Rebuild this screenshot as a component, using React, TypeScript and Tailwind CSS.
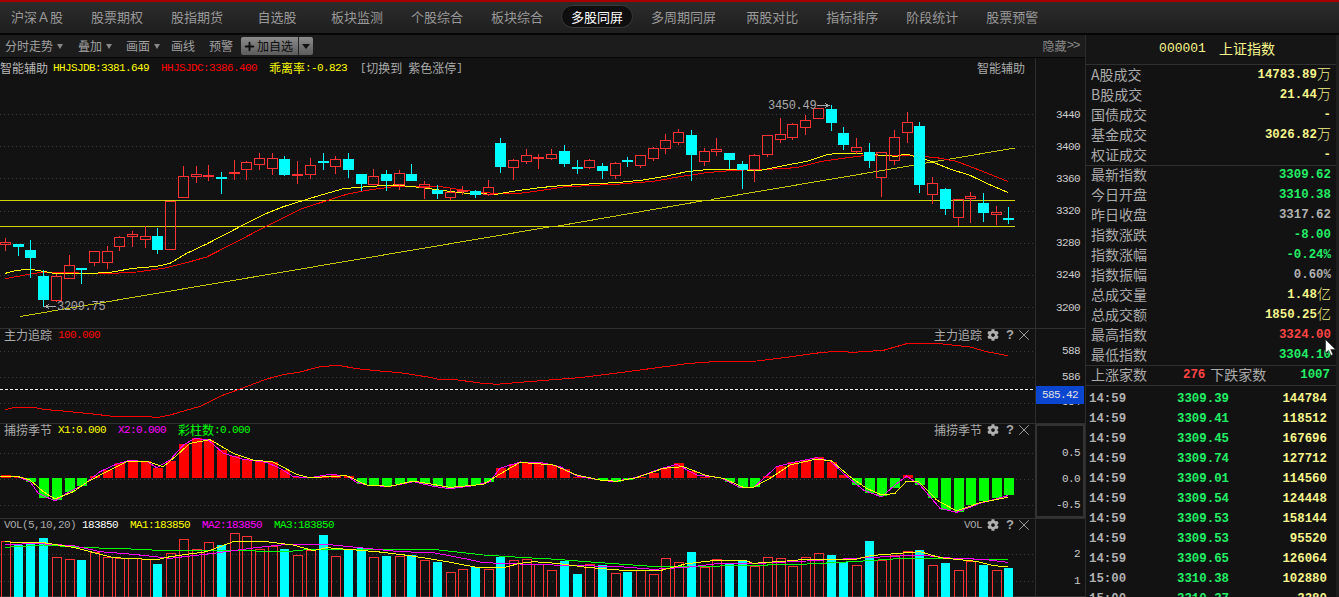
import type { ReactNode } from 'react';
import { Plus, X } from 'lucide-react';
import { FaCog } from 'react-icons/fa';

/* All chart series are read off a 3x crop of the terminal: the "z" values below are crop
   pixels, so z / 3 gives screen pixels. Section A starts at x=0, section B at x=520. */

const TABS = ['沪深Ａ股', '股票期权', '股指期货', '自选股', '板块监测', '个股综合', '板块综合', '多股同屏', '多周期同屏', '两股对比', '指标排序', '阶段统计', '股票预警'];

const barX = (i: number) => Math.round(5 + 12.7 * i) + 0.5;

// [wickTop, bodyTop, bodyBottom, wickBottom, 1 = up (hollow red) / 0 = down (cyan)]
const CANDLES: number[][] = [
  [444, 455, 464, 482, 1], [462, 462, 470, 497, 0], [450, 480, 503, 563, 0], [540, 558, 630, 650, 0],
  [552, 558, 634, 636, 1], [495, 526, 566, 566, 1], [533, 534, 540, 581, 0], [484, 484, 520, 527, 1],
  [468, 484, 520, 536, 1], [438, 442, 470, 482, 1], [423, 433, 440, 470, 1], [408, 439, 449, 473, 1],
  [414, 438, 480, 491, 0], [333, 333, 479, 479, 1], [228, 259, 323, 323, 1], [228, 253, 260, 278, 1],
  [225, 256, 260, 272, 1], [246, 261, 263, 311, 0], [210, 246, 251, 269, 1], [213, 217, 241, 269, 1],
  [190, 205, 224, 239, 1], [189, 205, 236, 254, 1], [198, 207, 255, 258, 0], [213, 252, 255, 281, 1],
  [204, 226, 254, 266, 1], [189, 214, 218, 239, 0], [198, 208, 230, 251, 1], [189, 207, 240, 263, 0],
  [252, 252, 282, 303, 0], [237, 259, 284, 284, 1], [240, 252, 273, 302, 0], [240, 250, 284, 299, 1],
  [222, 252, 273, 273, 0], [273, 283, 294, 326, 1], [285, 300, 312, 326, 0], [293, 305, 323, 330, 1],
  [288, 299, 306, 315, 1], [300, 303, 315, 323, 0], [270, 292, 315, 318, 1], [144, 159, 231, 249, 0],
  [207, 211, 233, 269, 1], [177, 196, 215, 222, 1], [192, 202, 206, 237, 1], [177, 193, 206, 210, 1],
  [165, 183, 222, 231, 0], [210, 231, 235, 252, 0], [207, 211, 233, 237, 1], [219, 228, 243, 267, 0],
  [216, 220, 257, 267, 1], [201, 209, 216, 231, 0], [195, 196, 227, 234, 1], [171, 175, 207, 213, 1],
  [132, 151, 176, 192, 1], [117, 127, 158, 165, 1], [120, 135, 195, 273, 0], [174, 184, 215, 228, 1],
  [144, 178, 185, 198, 1], [189, 189, 210, 237, 0], [213, 222, 240, 297, 0], [192, 196, 240, 276, 1],
  [135, 136, 194, 201, 1], [84, 133, 149, 159, 1], [99, 103, 143, 150, 1], [75, 91, 113, 135, 1],
  [54, 55, 87, 87, 1], [45, 57, 99, 123, 0], [111, 129, 165, 180, 0], [144, 172, 185, 192, 1],
  [159, 186, 213, 234, 0], [186, 187, 263, 321, 1], [120, 142, 212, 226, 1], [66, 97, 128, 159, 1],
  [96, 108, 285, 309, 0], [261, 280, 314, 342, 1], [294, 297, 357, 375, 0], [327, 328, 383, 408, 1],
  [306, 319, 326, 399, 1], [309, 339, 369, 396, 0], [348, 366, 374, 405, 1], [351, 384, 386, 402, 0],
];

const MAIN_YELLOW = [
  [16, 550, 30, 546, 50, 541, 90, 538, 130, 544, 160, 550, 200, 551, 260, 551, 330, 547, 400, 535, 470, 529, 510, 520, 560, 490, 620, 462, 720, 410, 800, 370, 850, 350, 905, 333, 960, 316, 1030, 296, 1100, 290, 1180, 285, 1260, 292, 1340, 303, 1400, 310, 1490, 313, 1520, 307],
  [0, 301, 60, 293, 120, 287, 190, 283, 300, 277, 370, 270, 440, 258, 500, 245, 570, 238, 640, 239, 720, 241, 780, 229, 860, 214, 920, 194, 960, 189, 1030, 192, 1130, 199, 1150, 193, 1170, 195, 1230, 213, 1290, 237, 1350, 256, 1400, 280, 1463, 307],
];
const MAIN_RED = [
  [16, 566, 60, 558, 100, 550, 150, 546, 200, 546, 260, 551, 340, 550, 410, 546, 490, 535, 560, 518, 620, 501, 720, 450, 800, 408, 900, 358, 980, 332, 1040, 313, 1100, 301, 1180, 290, 1260, 290, 1330, 291, 1400, 302, 1480, 310],
  [0, 310, 60, 302, 130, 291, 220, 286, 300, 282, 400, 274, 480, 260, 560, 248, 640, 241, 740, 238, 830, 233, 900, 215, 960, 206, 1040, 196, 1180, 197, 1250, 203, 1310, 214, 1380, 241, 1463, 274],
];

const TRACK_RED = [
  [16, 254, 40, 248, 100, 247, 130, 253, 190, 258, 260, 265, 340, 274, 450, 275, 470, 278, 510, 270, 600, 244, 660, 214, 720, 192, 800, 162, 850, 149, 900, 141, 960, 125, 1015, 121, 1070, 131, 1140, 138, 1200, 143, 1290, 157, 1310, 162, 1360, 163, 1440, 174, 1490, 178],
  [0, 172, 100, 164, 180, 158, 300, 143, 420, 127, 500, 116, 580, 110, 710, 108, 800, 97, 900, 83, 950, 79, 1000, 82, 1090, 76, 1160, 56, 1250, 55, 1350, 66, 1400, 80, 1463, 92],
];

// end of each histogram bar, zero line at z=460
const HIST = [
  450, 455, 472, 519, 526, 500, 484, 454, 435, 414, 406, 408, 428, 408, 357, 340, 345, 375, 392, 401,
  407, 411, 434, 456, 460, 452, 449, 452, 477, 481, 484, 478, 470, 478, 484, 490, 484, 481, 470, 429,
  418, 410, 414, 420, 431, 455, 460, 466, 471, 464, 455, 443, 428, 414, 438, 455, 460, 472, 489, 487,
  453, 423, 411, 405, 396, 410, 450, 480, 504, 514, 489, 450, 480, 519, 555, 562, 540, 529, 519, 510,
];
const HIST_MAGENTA = [
  [0, 455, 55, 456, 90, 470, 115, 505, 165, 528, 200, 505, 250, 480, 300, 440, 350, 417, 385, 407, 440, 409, 470, 428, 510, 405, 550, 360, 585, 340, 625, 345, 670, 385, 730, 403, 800, 412, 840, 430, 880, 455, 930, 458, 990, 448, 1040, 453, 1070, 472, 1110, 482, 1170, 484, 1240, 470, 1300, 484, 1350, 491, 1420, 482, 1470, 470, 1500, 430],
  [0, 411, 60, 412, 120, 425, 170, 453, 240, 465, 280, 470, 350, 457, 420, 432, 470, 418, 530, 450, 600, 458, 660, 488, 700, 488, 770, 425, 820, 412, 890, 398, 930, 408, 985, 458, 1030, 495, 1085, 516, 1125, 480, 1160, 453, 1200, 480, 1260, 550, 1310, 562, 1380, 535, 1463, 512],
];
const HIST_YELLOW = [
  [0, 453, 55, 455, 90, 465, 130, 500, 165, 522, 220, 500, 260, 472, 310, 445, 380, 410, 440, 409, 490, 425, 520, 400, 570, 355, 630, 344, 700, 385, 760, 405, 820, 411, 890, 448, 930, 458, 1040, 452, 1100, 480, 1170, 484, 1240, 468, 1350, 487, 1450, 478, 1500, 447],
  [0, 412, 100, 420, 170, 450, 240, 465, 290, 469, 350, 458, 430, 430, 490, 425, 560, 452, 610, 460, 670, 487, 700, 487, 750, 460, 810, 420, 890, 402, 935, 408, 990, 455, 1040, 490, 1085, 510, 1125, 505, 1160, 468, 1195, 468, 1250, 525, 1310, 558, 1380, 533, 1463, 517],
];

// [top of bar, 1 = up / 0 = down]
const VOLS: number[][] = [
  [647, 1], [660, 0], [653, 0], [639, 0], [697, 1], [703, 1], [705, 0], [682, 1], [695, 1], [700, 1],
  [700, 1], [703, 1], [717, 0], [685, 1], [643, 1], [673, 1], [652, 1], [660, 0], [625, 1], [634, 1],
  [672, 1], [664, 1], [672, 0], [691, 1], [676, 1], [630, 0], [694, 1], [673, 0], [670, 0], [697, 1],
  [693, 0], [694, 1], [690, 0], [706, 1], [711, 0], [742, 1], [733, 1], [725, 0], [733, 1], [695, 0],
  [706, 1], [703, 1], [718, 1], [736, 1], [708, 0], [747, 0], [718, 1], [720, 0], [745, 1], [741, 0],
  [735, 1], [748, 1], [700, 1], [712, 1], [681, 0], [725, 1], [703, 1], [714, 0], [706, 0], [724, 1],
  [697, 1], [700, 1], [722, 1], [697, 1], [685, 1], [690, 0], [712, 0], [721, 1], [648, 0], [706, 1],
  [690, 1], [679, 1], [675, 0], [721, 1], [714, 0], [736, 1], [707, 1], [720, 0], [736, 1], [729, 0],
];
const VOL_YELLOW = [
  [16, 650, 60, 653, 130, 653, 220, 667, 290, 685, 340, 698, 470, 704, 510, 695, 560, 688, 620, 680, 700, 650, 800, 650, 880, 660, 940, 677, 980, 668, 1130, 680, 1230, 692, 1330, 708, 1430, 727, 1510, 728],
  [0, 715, 40, 710, 110, 715, 200, 727, 310, 736, 420, 737, 500, 716, 580, 707, 680, 708, 700, 715, 800, 708, 870, 702, 1010, 702, 1050, 692, 1200, 680, 1260, 698, 1370, 709, 1420, 722, 1463, 725],
];
const VOL_MAGENTA = [
  [16, 660, 100, 655, 220, 662, 300, 680, 400, 688, 510, 700, 640, 685, 700, 677, 760, 669, 860, 658, 1000, 660, 1100, 670, 1200, 680, 1300, 683, 1400, 702, 1450, 713],
  [0, 717, 100, 720, 300, 725, 400, 733, 500, 727, 600, 715, 700, 716, 860, 708, 1040, 698, 1200, 690, 1300, 700, 1390, 703, 1463, 712],
];
const VOL_GREEN = [
  [16, 667, 130, 660, 260, 668, 370, 671, 500, 677, 720, 677, 860, 680, 940, 672, 1130, 672, 1300, 673, 1450, 690],
  [0, 697, 110, 703, 200, 710, 380, 723, 600, 723, 840, 718, 1000, 710, 1150, 700, 1463, 703],
];

const UP_RED = '#ff3333';
const CYAN = '#00ffff';

const toPoints = (sections: number[][], offset: number) =>
  sections
    .map((flat, s) =>
      flat
        .map((v, i) => (i % 2 === 0 ? `${(s === 0 ? 0 : 520) + v / 3},` : `${v / 3 + offset} `))
        .join('')
    )
    .join('');

function Series({ data, offset, color }: { data: number[][]; offset: number; color: string }) {
  return <polyline points={toPoints(data, offset)} fill="none" stroke={color} strokeWidth={1} shapeRendering="crispEdges" />;
}

function Grid({ ys }: { ys: number[] }) {
  return (
    <>
      {ys.map((y) => (
        <line key={y} x1={0} x2={1035} y1={y + 0.5} y2={y + 0.5} stroke="#3c3c3c" strokeDasharray="1 3" />
      ))}
    </>
  );
}

function Chart({ height, children }: { height: number; children: ReactNode }) {
  return (
    <svg className="absolute inset-0" width={1035} height={height} viewBox={`0 0 1035 ${height}`} shapeRendering="crispEdges">
      {children}
    </svg>
  );
}

function MainChart() {
  const off = 32; // main pane starts at y=58
  return (
    <Chart height={270}>
      <Grid ys={[56, 88, 120, 153, 185, 217, 249]} />
      <line x1={0} x2={1015} y1={142.5} y2={142.5} stroke="#d4d400" />
      <line x1={0} x2={1015} y1={168.5} y2={168.5} stroke="#d4d400" />
      <polyline points="20,258.5 552,168.5" fill="none" stroke="#c4c400" />
      <polyline points="558,168 705,142.5" fill="none" stroke="#c4c400" />
      <polyline points="711,141.5 1015,90" fill="none" stroke="#c4c400" />
      <Series data={MAIN_RED} offset={off} color="#ff0000" />
      <Series data={MAIN_YELLOW} offset={off} color="#ffff00" />
      {CANDLES.map(([wt, bt, bb, wb, up], i) => {
        const x = barX(i);
        const c = up ? UP_RED : CYAN;
        const [a, b, d, e] = [wt, bt, bb, wb].map((z) => Math.round(z / 3) + off);
        return (
          <g key={i}>
            <line x1={x} x2={x} y1={a} y2={b} stroke={c} />
            <line x1={x} x2={x} y1={d} y2={e} stroke={c} />
            {up ? (
              <rect x={x - 5} y={b + 0.5} width={10} height={Math.max(d - b - 1, 1)} fill="none" stroke={c} />
            ) : (
              <rect x={x - 5.5} y={b} width={11} height={Math.max(d - b, 2)} fill={c} />
            )}
          </g>
        );
      })}
      <text x={768} y={51} fill="#aaaaaa" fontSize={12} fontFamily="Liberation Mono" letterSpacing={-0.3}>3450.49</text>
      <path d="M817 47.5H829M825 45.5L829 47.5L825 49.5" fill="none" stroke="#aaaaaa" />
      <text x={57} y={252} fill="#aaaaaa" fontSize={12} fontFamily="Liberation Mono" letterSpacing={-0.3}>3209.75</text>
      <path d="M45 248.5H56M49 246.5L45 248.5L49 250.5" fill="none" stroke="#aaaaaa" />
    </Chart>
  );
}

function TrackChart() {
  return (
    <Chart height={94}>
      <Grid ys={[22, 48, 74]} />
      <line x1={0} x2={1035} y1={60.5} y2={60.5} stroke="#f0f0f0" strokeDasharray="3 2" />
      <Series data={TRACK_RED} offset={-4} color="#ff0000" />
    </Chart>
  );
}

function HistChart() {
  const off = -99;
  const zero = Math.round(460 / 3) + off;
  return (
    <Chart height={94}>
      <Grid ys={[29, 55, 81]} />
      {HIST.map((z, i) => {
        const y = Math.round(z / 3) + off;
        if (y === zero) return null;
        const up = y < zero;
        return <rect key={i} x={barX(i) - 5} y={up ? y : zero} width={10} height={Math.abs(y - zero)} fill={up ? '#ff0000' : '#00ff00'} />;
      })}
      <Series data={HIST_MAGENTA} offset={off} color="#ff00ff" />
      <Series data={HIST_YELLOW} offset={off} color="#ffff00" />
    </Chart>
  );
}

function VolChart() {
  const off = -194;
  return (
    <Chart height={78}>
      <Grid ys={[35, 62]} />
      {VOLS.map(([z, up], i) => {
        const y = Math.round(z / 3) + off;
        const x = barX(i);
        return up ? (
          <rect key={i} x={x - 4} y={y + 0.5} width={9} height={90} fill="none" stroke={UP_RED} />
        ) : (
          <rect key={i} x={x - 4.5} y={y} width={9} height={90} fill={CYAN} />
        );
      })}
      <Series data={VOL_GREEN} offset={off} color="#00ff00" />
      <Series data={VOL_MAGENTA} offset={off} color="#ff00ff" />
      <Series data={VOL_YELLOW} offset={off} color="#ffff00" />
    </Chart>
  );
}

function M({ className, children }: { className?: string; children: ReactNode }) {
  return <span className={`[font-family:'Liberation_Mono',monospace] text-[11px] tracking-[-0.6px] ${className ?? ''}`}>{children}</span>;
}

function PaneTools({ name }: { name: ReactNode }) {
  return (
    <div className="flex items-center pr-[2px] text-[#aaaaaa]">
      {name}
      <FaCog className="ml-[5px] text-[12px] text-[#b0b0b0]" />
      <span className="ml-[7px] w-[7px] text-center [font-family:'Liberation_Sans',sans-serif] text-[13px] font-bold">?</span>
      <X size={18} strokeWidth={1.2} className="ml-[2px]" />
    </div>
  );
}

function Pane({ height, header, chart, axis }: { height: string; header: ReactNode; chart: ReactNode; axis: ReactNode }) {
  return (
    <div className={`flex border-b border-[#303030] ${height}`}>
      <div className="relative w-[1035px] shrink-0">
        {chart}
        <div className="relative -mt-px flex h-[14px] items-center justify-between text-[12px] leading-[14px] text-[#aaaaaa]">{header}</div>
      </div>
      {axis}
    </div>
  );
}

function Axis({ labels, className }: { labels: string[]; className: string }) {
  return (
    <div className={`flex w-[50px] flex-col items-end border-l border-[#2c2c2c] pr-[5px] text-[#cccccc] ${className}`}>
      {labels.map((label) => (
        <M key={label} className="h-[16px] leading-[16px]">{label}</M>
      ))}
    </div>
  );
}

function Caret() {
  return <span className="ml-[4px] inline-block border-x-[3.5px] border-t-[5px] border-x-transparent border-t-[#888888]" />;
}

const SUMMARY_A = [
  ['A股成交', '14783.89', '万'],
  ['B股成交', '21.44', '万'],
  ['国债成交', '-', ''],
  ['基金成交', '3026.82', '万'],
  ['权证成交', '-', ''],
];
const SUMMARY_B = [
  ['最新指数', '3309.62', '', 'text-[#22ee66]'],
  ['今日开盘', '3310.38', '', 'text-[#22ee66]'],
  ['昨日收盘', '3317.62', '', 'text-[#b0b0b0]'],
  ['指数涨跌', '-8.00', '', 'text-[#22ee66]'],
  ['指数涨幅', '-0.24%', '', 'text-[#22ee66]'],
  ['指数振幅', '0.60%', '', 'text-[#b0b0b0]'],
  ['总成交量', '1.48', '亿', 'text-[#f5f58c]'],
  ['总成交额', '1850.25', '亿', 'text-[#f5f58c]'],
  ['最高指数', '3324.00', '', 'text-[#ff4444]'],
  ['最低指数', '3304.10', '', 'text-[#22ee66]'],
];
const TICKS = [
  ['14:59', '3309.39', '144784'],
  ['14:59', '3309.41', '118512'],
  ['14:59', '3309.45', '167696'],
  ['14:59', '3309.74', '127712'],
  ['14:59', '3309.01', '114560'],
  ['14:59', '3309.54', '124448'],
  ['14:59', '3309.53', '158144'],
  ['14:59', '3309.53', '95520'],
  ['14:59', '3309.65', '126064'],
  ['15:00', '3310.38', '102880'],
  ['15:00', '3310.37', '3280'],
];

const NUM = "[font-family:'Liberation_Mono',monospace] text-[12.4px] font-bold";

function StatRow({ label, value, unit, color }: { label: string; value: string; unit: string; color: string }) {
  return (
    <div className="flex h-[20px] items-center justify-between pr-[5px] pb-[2px] pl-[5px]">
      <span className="text-[14px] leading-[18px] text-[#aaaaaa]">{label}</span>
      <span className={`flex items-center ${color}`}>
        <span className={`mt-[2px] ${NUM}`}>{value}</span>
        {unit && <span className="mb-[2px] text-[14px] leading-none font-light">{unit}</span>}
      </span>
    </div>
  );
}

function RightPanel() {
  return (
    <aside className="flex w-[251px] shrink-0 flex-col overflow-hidden border-l border-[#2c2c2c] bg-[#121212]">
      <div className="flex h-[29px] shrink-0 items-center justify-center gap-[13px] bg-[#151515] pb-[2px] pl-[12px] text-[14px] text-[#f5f58c]">
        <span className="[font-family:'Liberation_Mono',monospace] text-[13px]">000001</span>
        <span>上证指数</span>
      </div>
      <div className="shrink-0 border-t border-[#303030]">
        {SUMMARY_A.map(([label, value, unit]) => (
          <StatRow key={label} label={label} value={value} unit={unit} color="text-[#f5f58c]" />
        ))}
      </div>
      <div className="shrink-0 border-b border-[#303030] shadow-[inset_0_1px_0_#303030]">
        {SUMMARY_B.map(([label, value, unit, color]) => (
          <StatRow key={label} label={label} value={value} unit={unit} color={color} />
        ))}
      </div>
      <div className="flex h-[20px] shrink-0 items-center border-b border-[#303030] pr-[6px] pl-[5px]">
        <span className="mb-[3px] text-[14px] leading-[16px] text-[#aaaaaa]">上涨家数</span>
        <span className={`ml-[36px] ${NUM} text-[#ff4444]`}>276</span>
        <span className="mb-[3px] ml-[5px] text-[14px] leading-[16px] text-[#aaaaaa]">下跌家数</span>
        <span className={`ml-auto ${NUM} text-[#22ee66]`}>1007</span>
      </div>
      <div className="pt-[3px]">
        {TICKS.map(([time, price, vol], i) => (
          <div key={i} className={`grid h-[20px] grid-cols-[88px_1fr_auto] items-center pr-[9px] pl-[3px] ${NUM}`}>
            <span className="text-[#b0b0b0]">{time}</span>
            <span className="text-[#22ee66]">{price}</span>
            <span className="text-[#f5f58c]">{vol}</span>
          </div>
        ))}
      </div>
    </aside>
  );
}

export default function App() {
  return (
    <div className="relative flex h-[597px] w-[1339px] flex-col overflow-hidden bg-[#121212] [font-family:'Noto_Sans_CJK_SC','Liberation_Sans',sans-serif]">
      <div className="h-[2px] shrink-0 bg-[#a80000]" />

      {/* Tab bar */}
      <nav className="flex h-[31px] shrink-0 items-center gap-2 bg-gradient-to-b from-[#2c2c2c] to-[#1e1e1e] pb-[2px] pl-px text-[13px] text-[#999999]">
        {TABS.map((tab) => (
          <span
            key={tab}
            className={
              tab === '多股同屏'
                ? 'min-w-[72px] rounded-full border border-[#3a3a3a] bg-[#0e0e0e] px-[9px] py-[1px] text-center text-white'
                : tab === '多周期同屏'
                  ? 'mr-0.5 min-w-[72px] px-2.5 text-center'
                  : 'min-w-[72px] px-2.5 text-center'
            }
          >
            {tab}
          </span>
        ))}
      </nav>
      <div className="h-[2px] shrink-0 bg-[#050505]" />

      <div className="flex min-h-0 flex-1">
        <div className="flex w-[1085px] shrink-0 flex-col">
          {/* Toolbar */}
          <div className="flex h-[23px] shrink-0 items-center border-b border-[#050505] bg-[#1c1c1c] pl-[5px] text-[12px] text-[#a0a0a0]">
            <span className="flex w-[73px] items-center">分时走势<Caret /></span>
            <span className="flex w-[48px] items-center">叠加<Caret /></span>
            <span className="flex w-[45px] items-center">画面<Caret /></span>
            <span className="w-[38px]">画线</span>
            <span className="w-[32px]">预警</span>
            <div className="flex h-[18px] w-[72px] items-center rounded-[2px] bg-gradient-to-b from-[#8c8c8c] to-[#5c5c5c] text-[#0c0c0c]">
              <Plus size={13} strokeWidth={3.5} className="ml-[2px] shrink-0" />
              <span className="ml-px w-[41px]">加自选</span>
              <span className="flex h-full flex-1 items-center justify-center border-l border-[#222222]">
                <span className="inline-block border-x-[4px] border-t-[5px] border-x-transparent border-t-[#111111]" />
              </span>
            </div>
            <span className="ml-auto flex items-center pr-[6px] text-[#888888]">
              隐藏<span className="[font-family:'Liberation_Mono',monospace] text-[13px] tracking-[-1.5px]">&gt;&gt;</span>
            </span>
          </div>

          <Pane
            height="h-[271px]"
            chart={<MainChart />}
            header={
              <>
                <div className="mt-[8px] flex items-center whitespace-pre">
                  <span className="text-[#b8b8b8]">智能辅助</span>
                  <M className="ml-[5px] text-[#ffff00]">HHJSJDB:3381.649</M>
                  <M className="ml-[12px] text-[#ff0000]">HHJSJDC:3386.400</M>
                  <span className="ml-[12px] text-[#ffff00]">乖离率</span>
                  <M className="text-[#ffff00]">:-0.823</M>
                  <M className="ml-[13px]">[</M>
                  <span>切换到</span>
                  <M> </M>
                  <span>紫色涨停</span>
                  <M>]</M>
                </div>
                <span className="mt-[8px] pr-[10px]">智能辅助</span>
              </>
            }
            axis={<Axis labels={['3440', '3400', '3360', '3320', '3280', '3240', '3200']} className="gap-[16.1px] pt-[49px]" />}
          />

          <Pane
            height="h-[95px]"
            chart={<TrackChart />}
            header={
              <>
                <div className="flex items-center pl-1">
                  <span>主力追踪</span>
                  <M className="ml-[6px] text-[#ff0000]">100.000</M>
                </div>
                <PaneTools name={<span>主力追踪</span>} />
              </>
            }
            axis={
              <div className="relative">
                <Axis labels={['588', '586', '584']} className="h-full gap-[9.7px] pt-[14px]" />
                {/* Last-price tag sits over the axis */}
                <div className="absolute top-[57px] left-px flex h-[18px] w-[48px] items-center justify-center bg-[#0a46d0]">
                  <M className="text-[#e0e0e0]">585.42</M>
                </div>
              </div>
            }
          />

          <Pane
            height="h-[95px]"
            chart={<HistChart />}
            header={
              <>
                <div className="flex items-center pl-1">
                  <span>捕捞季节</span>
                  <M className="ml-[6px] text-[#ffff00]">X1:0.000</M>
                  <M className="ml-[12px] text-[#ff00ff]">X2:0.000</M>
                  <span className="ml-[12px] text-[#00ff00]">彩柱数</span>
                  <M className="text-[#00ff00]">:0.000</M>
                </div>
                <PaneTools name={<span>捕捞季节</span>} />
              </>
            }
            axis={
              <div className="flex w-[50px] flex-col items-end gap-[10px] border-2 border-[#333333] pt-[19px] pr-[3px] text-[#cccccc]">
                {['0.5', '0.0', '-0.5'].map((label) => (
                  <M key={label} className="h-[16px] leading-[16px]">{label}</M>
                ))}
              </div>
            }
          />

          <Pane
            height="h-[78px]"
            chart={<VolChart />}
            header={
              <>
                <div className="flex items-center pl-1">
                  <M>VOL(5,10,20)</M>
                  <M className="ml-[6px] text-white">183850</M>
                  <M className="ml-[12px] text-[#ffff00]">MA1:183850</M>
                  <M className="ml-[12px] text-[#ff00ff]">MA2:183850</M>
                  <M className="ml-[12px] text-[#00ff00]">MA3:183850</M>
                </div>
                <PaneTools name={<M>VOL</M>} />
              </>
            }
            axis={<Axis labels={['2', '1']} className="gap-[11px] pt-[27px]" />}
          />
        </div>

        <RightPanel />
        <div className="flex-1 bg-[#1e1e1e]" />
      </div>

      {/* Mouse pointer caught in the screenshot */}
      <svg className="absolute top-[339px] left-[1325px]" width={12} height={18} viewBox="0 0 12 18">
        <path d="M0.5 0.5V14L3.6 11.2L6 16.5L8 15.6L5.7 10.6H10.5Z" fill="#ffffff" stroke="#222222" strokeWidth={0.6} />
      </svg>
    </div>
  );
}
